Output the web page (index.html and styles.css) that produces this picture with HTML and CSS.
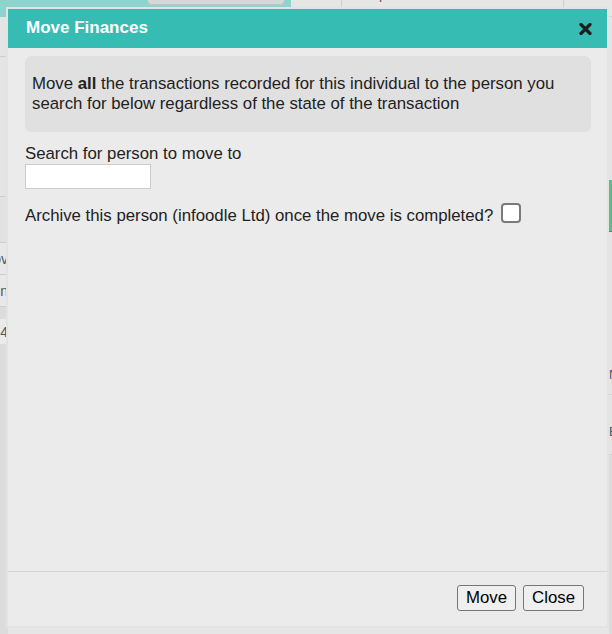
FILE: index.html
```html
<!DOCTYPE html>
<html lang="en">
<head>
<meta charset="utf-8">
<title>Move Finances</title>
<link rel="stylesheet" href="styles.css">
</head>
<body>
<div class="page">
  <header class="topbar">
    <div class="brand"><span class="brand-search"></span></div>
    <div class="tabs">
      <span class="tab tab-wide"></span>
      <span class="tab tab-mid"><span class="tab-label">Reports</span></span>
      <span class="tab tab-end"></span>
    </div>
  </header>
  <div class="main">
    <div class="col-left">
      <div class="row row-head"></div>
      <div class="row row-tall"></div>
      <div class="row row-sub"></div>
      <div class="row row-line"><span>Nov</span></div>
      <div class="row row-line"><span>Jun</span></div>
      <div class="row row-band"></div>
      <div class="row row-line row-light"><span>12:4</span></div>
      <div class="row row-fill"></div>
    </div>
    <div class="col-mid"></div>
    <div class="col-right">
      <div class="side-gap"></div>
      <div class="side-button"></div>
      <div class="side-cell"><span>N</span></div>
      <div class="side-cell side-cell-b"><span>E</span></div>
      <div class="side-fill"></div>
    </div>
  </div>
</div>

<div class="modal" role="dialog" aria-labelledby="move-title">
  <div class="modal-header">
    <h2 id="move-title" class="modal-title">Move Finances</h2>
    <button class="modal-close" type="button" aria-label="Close">
      <svg width="13" height="12" viewBox="0 0 13 12" aria-hidden="true">
        <path d="M2 1.5 L11 10.5 M11 1.5 L2 10.5" stroke="#1e1e1e" stroke-width="3.2" stroke-linecap="round"/>
      </svg>
    </button>
  </div>
  <div class="modal-body">
    <div class="notice">Move <b>all</b> the transactions recorded for this individual to the person you search for below regardless of the state of the transaction</div>
    <label class="field-label" for="move-search">Search for person to move to</label>
    <input class="field-input" id="move-search" type="text">
    <div class="archive-row">
      <label for="archive-person">Archive this person (infoodle Ltd) once the move is completed?</label>
      <input class="archive-check" id="archive-person" type="checkbox">
    </div>
  </div>
  <div class="modal-footer">
    <button class="btn" type="button">Move</button>
    <button class="btn" type="button">Close</button>
  </div>
</div>
</body>
</html>
```

FILE: styles.css
```css
html, body {
  margin: 0;
  padding: 0;
}

body {
  background: #dcdcdc;
  font-family: "Liberation Sans", Arial, sans-serif;
  color: #222;
  overflow: hidden;
}

/* ---- page behind the dialog ---- */
.page {
  width: 612px;
  height: 634px;
  display: flex;
  flex-direction: column;
}

.topbar {
  height: 17px;
  display: flex;
  flex-shrink: 0;
}

.brand {
  width: 291px;
  background: #8dd4cf;
}

.brand-search {
  display: block;
  margin-left: 147px;
  width: 136px;
  height: 4px;
  background: #d7d7d7;
  border: 1px solid #c4c4c4;
  border-top: 0;
  border-radius: 0 0 8px 8px;
}

.tabs {
  flex: 1;
  display: flex;
  background: #e6e6e6;
  border-bottom: 1px solid #d0d0d0;
}

.tab {
  display: block;
  border-right: 1px solid #cfcfcf;
  overflow: hidden;
}

.tab-wide { width: 50px; }
.tab-mid { width: 221px; }
.tab-end { flex: 1; border-right: 0; }

/* tab caption sits mostly above the visible strip */
.tab-label {
  display: block;
  margin-top: -13px;
  padding-left: 22px;
  font-size: 12px;
  line-height: 16px;
  color: #444;
}

.main {
  flex: 1;
  display: flex;
}

.col-left {
  width: 8px;
  display: flex;
  flex-direction: column;
  background: #e4e4e4;
}

.row {
  display: flex;
  justify-content: flex-end;
  align-items: center;
  overflow: hidden;
  white-space: nowrap;
  font-size: 14px;
  color: #555;
  border-bottom: 1px solid #cdcdcd;
}

.row span { flex-shrink: 0; }

.row-head { height: 39px; }
.row-tall { height: 139px; }
.row-sub { height: 45px; background: #e2e2e2; }
.row-line { height: 31px; background: #e8e8e8; }
.row-band { height: 12px; background: #dcdcdc; border-bottom: 0; }
.row-light { height: 25px; background: #ebebeb; border-bottom: 0; }
.row-fill { flex: 1; background: #dcdcdc; border-bottom: 0; }

.col-mid {
  flex: 1;
  background: #e6e6e6;
}

.col-right {
  width: 3px;
  display: flex;
  flex-direction: column;
  background: #e4e4e4;
}

.side-gap { height: 163px; }

.side-button {
  height: 51px;
  background: #5dbb8c;
  border-bottom: 1px solid #3f8f69;
}

.side-cell {
  height: 163px;
  display: flex;
  align-items: flex-end;
  padding-bottom: 12px;
  box-sizing: border-box;
  border-bottom: 1px solid #d2d2d2;
  font-size: 13px;
  line-height: 14px;
  color: #555;
  overflow: hidden;
}

.side-cell-b {
  height: 60px;
  padding-bottom: 15px;
}

.side-fill { flex: 1; background: #dcdcdc; }

/* ---- dialog ---- */
.modal {
  position: fixed;
  left: 6px;
  top: 7px;
  width: 599px;
  height: 617px;
  border: 2px solid #e3e3e3;
  background: #ebebeb;
  display: flex;
  flex-direction: column;
}

.modal-header {
  height: 39px;
  flex-shrink: 0;
  background: #37bcb4;
  display: flex;
  align-items: center;
  justify-content: space-between;
  padding: 0 15px 2px 18px;
  box-sizing: border-box;
}

.modal-title {
  margin: 0;
  font-size: 17px;
  font-weight: bold;
  color: #fff;
  line-height: 20px;
}

.modal-close {
  border: 0;
  background: none;
  padding: 0;
  margin-top: 2px;
  width: 13px;
  height: 12px;
  display: block;
  cursor: pointer;
}

.modal-close svg { display: block; }

.modal-body {
  flex: 1;
  padding: 8px 16px 0 17px;
  font-size: 16.8px;
  line-height: 20px;
}

.notice {
  background: #e0e0e0;
  border-radius: 6px;
  padding: 18px 7px;
  color: #222;
}

.field-label {
  display: block;
  margin-top: 12px;
}

.field-input {
  display: block;
  box-sizing: border-box;
  width: 126px;
  height: 25px;
  margin: 0;
  border: 1px solid #cccccc;
  background: #fff;
  padding: 2px 4px;
  font: inherit;
}

.archive-row {
  display: flex;
  align-items: flex-start;
  margin-top: 17px;
}

.archive-check {
  appearance: none;
  -webkit-appearance: none;
  box-sizing: border-box;
  flex-shrink: 0;
  width: 20px;
  height: 20px;
  margin: -3px 0 0 8px;
  border: 2px solid #7a7a7a;
  border-radius: 4px;
  background: #fff;
}

.modal-footer {
  flex-shrink: 0;
  border-top: 1px solid #d5d5d5;
  padding: 13px 23px 15px;
  display: flex;
  justify-content: flex-end;
  gap: 7px;
}

.btn {
  box-sizing: border-box;
  height: 26px;
  padding: 1px 8px;
  font-family: "Liberation Sans", Arial, sans-serif;
  font-size: 16.8px;
  line-height: 20px;
  color: #000;
  background: #efefef;
  border: 1px solid #767676;
  border-radius: 3px;
}
```
